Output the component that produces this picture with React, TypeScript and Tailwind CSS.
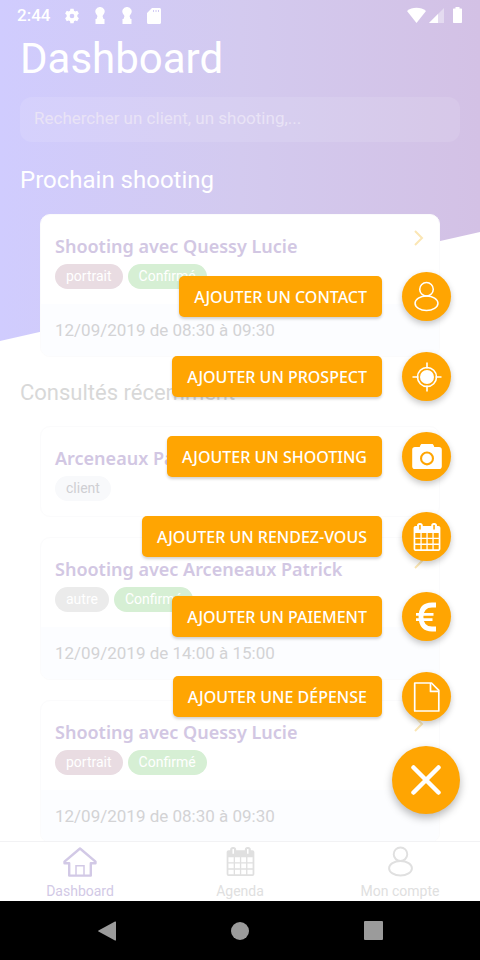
import type { ReactNode } from "react";

const roboto = "font-['Roboto','Liberation_Sans',sans-serif]";
const heading = "font-['Noto_Sans','Open_Sans',sans-serif]";

function PersonIcon({ size, stroke }: { size: number; stroke: number }) {
  return (
    <svg width={size} height={size} viewBox="0 0 32 32" fill="none" stroke="currentColor" strokeWidth={stroke} aria-hidden="true">
      <circle cx="16" cy="8.500" r="7" />
      <ellipse cx="16" cy="23" rx="11.800" ry="7.500" />
    </svg>
  );
}

function TargetIcon() {
  return (
    <svg width="30" height="30" viewBox="0 0 30 30" fill="none" stroke="currentColor" strokeWidth="1.600" aria-hidden="true">
      <circle cx="15" cy="15" r="9.500" />
      <circle cx="15" cy="15" r="7" fill="currentColor" stroke="none" />
      <path d="M15 .5v6M15 23.500v6M.5 15h6M23.500 15h6" />
    </svg>
  );
}

function CameraIcon() {
  return (
    <svg width="30" height="30" viewBox="0 0 30 30" fill="currentColor" aria-hidden="true">
      <path fillRule="evenodd" d="M10 2h10c.8 0 1.200.4 1.500 1.100L22.300 5H27c1.700 0 2.800 1.100 2.800 2.700v16.700c0 1.600-1.100 2.700-2.800 2.700H3C1.300 27.100.2 26 .2 24.400V7.700C.2 6.100 1.300 5 3 5h4.700l.8-1.900C8.800 2.400 9.200 2 10 2zM15 9.400a7 7 0 1 0 0 14 7 7 0 0 0 0-14zm0 2.100a4.900 4.900 0 1 1 0 9.800 4.900 4.900 0 0 1 0-9.800z" />
    </svg>
  );
}

function CalendarIcon({ size }: { size: number }) {
  return (
    <svg width={size} height={size} viewBox="0 0 30 30" aria-hidden="true">
      <path
        fill="currentColor"
        fillRule="evenodd"
        d="M3.500 4H5V3.500C5 2 6 1 7.500 1h.8c1.500 0 2.500 1 2.500 2.500V4h8.400v-.5c0-1.500 1-2.500 2.500-2.500h.8C24 1 25 2 25 3.500V4h1.500c1.100 0 1.900.8 1.900 1.900v21.200c0 1.100-.8 1.900-1.900 1.900h-23c-1.100 0-1.900-.8-1.900-1.900V5.900C1.600 4.800 2.400 4 3.500 4zM7.200 3v4.500h1.500V3zM21.300 3v4.500h1.500V3zM3.300 11v4.700h5.100V11zm6.400 0v4.700h4.700V11zm6 0v4.700h4.700V11zm6 0v4.700h5V11zM3.300 17v4.600h5.100V17zm6.400 0v4.600h4.700V17zm6 0v4.600h4.700V17zm6 0v4.600h5V17zM3.300 22.900v4.400h5.100v-4.400zm6.400 0v4.400h4.700v-4.400zm6 0v4.400h4.700v-4.400zm6 0v4.400h5v-4.400z"
      />
    </svg>
  );
}

function EuroIcon() {
  return (
    <svg width="30" height="30" viewBox="0 0 30 30" fill="none" stroke="currentColor" aria-hidden="true">
      <path strokeWidth="4.800" d="M24 3H20C13 3 9 7 9 15s4 12 11 12h4" />
      <path strokeWidth="2.800" d="M4 12.300h17.500M4 17.700h16.500" />
    </svg>
  );
}

function FileIcon() {
  return (
    <svg width="30" height="30" viewBox="0 0 30 30" fill="none" stroke="currentColor" strokeWidth="1.700" strokeLinejoin="round" aria-hidden="true">
      <path d="M2.700 1h16.800l7.300 7.400V29H2.700z" />
      <path d="M18.500 1v8.400h8.300" />
    </svg>
  );
}

function HomeIcon() {
  return (
    <svg width="34" height="30" viewBox="0 0 34 30" fill="none" stroke="currentColor" aria-hidden="true">
      <path strokeWidth="2.400" strokeLinejoin="round" d="M17 1.500 1.500 14.600v1.600h4.700V28.600h21.600V16.200h4.700v-1.600z" />
      <path strokeWidth="1.500" d="M13 28.500V18.800h8v9.700" />
    </svg>
  );
}

function Keyhole({ className }: { className: string }) {
  return (
    <svg className={className} width="12" height="17" viewBox="0 0 12 17" fill="currentColor" aria-hidden="true">
      <path d="M6 0a4.500 4.500 0 0 0-3.500 7.500L3.500 9 2.500 12H1.500v5h9v-5h-1l-1-3 1-1.500A4.500 4.500 0 0 0 6 0z" />
    </svg>
  );
}

function StatusBar() {
  return (
    <div className="flex h-[31px] shrink-0 items-center justify-between px-[17px] text-white">
      <div className="flex items-center">
        <span className="text-[17px] font-medium">2:44</span>
        <svg className="ml-[14px]" width="16" height="16" viewBox="0 0 24 24" fill="currentColor" aria-hidden="true">
          <path fillRule="evenodd" d="M9.600 1h4.800l.6 3.100 1.900 1.100 3-1.100 2.400 4.200L20 10.600v2.700l2.300 2.200-2.400 4.200-3-1-1.900 1.100-.6 3.200H9.600L9 19.800l-1.900-1.100-3 1-2.400-4.200L4 13.300v-2.700L1.700 8.300l2.400-4.200 3 1.100L9 4.100zM12 8.500a3.500 3.500 0 1 0 0 7 3.500 3.500 0 0 0 0-7z" />
        </svg>
        <Keyhole className="ml-[14px]" />
        <Keyhole className="ml-[15px]" />
        <svg className="ml-[14px]" width="14" height="16" viewBox="0 0 14 16" fill="currentColor" aria-hidden="true">
          <path fillRule="evenodd" d="M5 0h7.500C13.400 0 14 .6 14 1.500v13c0 .9-.6 1.500-1.500 1.500h-11C.6 16 0 15.400 0 14.500V5zm1 2v2h1V2zm2.500 0v2h1V2zM11 2v2h1V2z" />
        </svg>
      </div>
      <svg width="56" height="17" viewBox="0 0 56 17" fill="currentColor" aria-hidden="true">
        <path d="M0 4C5-.3 14-.3 19 4L9.500 16z" />
        <path d="M37 1v15H22z" opacity=".4" />
        <path d="M31 7v9h-9z" />
        <path d="M48.500 0h4v1.500H54c.7 0 1 .4 1 1V15c0 .7-.4 1-1 1h-7c-.7 0-1-.4-1-1V2.500c0-.6.3-1 1-1h1.500z" />
      </svg>
    </div>
  );
}

type Tag = { text: string; tone: string };

const portrait: Tag = { text: "portrait", tone: "bg-[#e9dce2] text-white" };
const confirmed: Tag = { text: "Confirmé", tone: "bg-[#d6efd4] text-white" };
const other: Tag = { text: "autre", tone: "bg-[#ebebeb] text-white" };
const client: Tag = { text: "client", tone: "bg-[#f8f9fb] text-[#cfcfd3]" };

function Card({ title, tags, date }: { title: string; tags: Tag[]; date?: string }) {
  return (
    <article className="mx-5 overflow-hidden rounded-[10px] border border-[#fbfbfc] bg-white">
      <div className="flex h-[89px] items-start justify-between px-[14px]">
        <div className="pt-[17px]">
          <h3 className={`text-[18px] leading-[28px] font-semibold text-[#d2c7e3] ${heading}`}>{title}</h3>
          <ul className="mt-[4px] flex gap-[5px]">
            {tags.map((tag) => (
              <li key={tag.text} className={`h-[25px] rounded-full px-[11px] text-[14px] leading-[25px] ${tag.tone}`}>
                {tag.text}
              </li>
            ))}
          </ul>
        </div>
        {date && (
          <svg className="mt-[15px]" width="12" height="16" viewBox="0 0 12 16" fill="none" stroke="#fbe6b4" strokeWidth="2" aria-hidden="true">
            <path d="M2 1l7 7-7 7" />
          </svg>
        )}
      </div>
      {date && <p className="h-[52px] bg-[#fcfdff] px-[14px] text-[17px] leading-[53px] text-[#d3d3d5]">{date}</p>}
    </article>
  );
}

const actions: { label: string; icon: ReactNode }[] = [
  { label: "AJOUTER UN CONTACT", icon: <PersonIcon size={31} stroke={1.6} /> },
  { label: "AJOUTER UN PROSPECT", icon: <TargetIcon /> },
  { label: "AJOUTER UN SHOOTING", icon: <CameraIcon /> },
  { label: "AJOUTER UN RENDEZ-VOUS", icon: <CalendarIcon size={30} /> },
  { label: "AJOUTER UN PAIEMENT", icon: <EuroIcon /> },
  { label: "AJOUTER UNE DÉPENSE", icon: <FileIcon /> },
];

function ActionMenu() {
  return (
    <div className="absolute right-5 bottom-[146px] flex flex-col items-end">
      <div className="mr-[9px] mb-[25px] flex flex-col items-end gap-[31px]">
        {actions.map((action) => (
          <button key={action.label} type="button" className="flex items-center gap-5 text-white">
            <span className={`h-[41px] rounded-[5px] bg-[#ffa502] px-[15px] text-[16px] leading-[42px] font-medium whitespace-nowrap shadow-[0_2px_3px_rgba(0,0,0,0.18)] ${heading}`}>
              {action.label}
            </span>
            <span className="flex size-[49px] items-center justify-center rounded-full bg-[#ffa502] shadow-[0_3px_6px_rgba(0,0,0,0.22)]">
              {action.icon}
            </span>
          </button>
        ))}
      </div>
      <button type="button" aria-label="Fermer" className="flex size-[68px] items-center justify-center rounded-full bg-[#ffa502] text-white shadow-[0_4px_8px_rgba(0,0,0,0.28)]">
        <svg width="30" height="30" viewBox="0 0 30 30" fill="none" stroke="currentColor" strokeWidth="4.500" strokeLinecap="round" aria-hidden="true">
          <path d="M2.500 2.500l25 25M27.500 2.500l-25 25" />
        </svg>
      </button>
    </div>
  );
}

function Tab({ label, icon, tone }: { label: string; icon: ReactNode; tone: string }) {
  return (
    <a href="#" className={`flex flex-1 flex-col items-center pt-[4px] text-[14px] leading-[16px] ${tone}`}>
      <span className="flex h-[31px] items-center">{icon}</span>
      <span className="mt-[6px]">{label}</span>
    </a>
  );
}

export default function App() {
  return (
    <div className={`relative flex h-screen flex-col overflow-hidden bg-white ${roboto}`}>
      <div className="absolute inset-x-0 top-0 h-[341px] bg-linear-to-r from-[#d0ccfe] via-[#d3caef] to-[#d3c1e5] [clip-path:polygon(0_0,100%_0,100%_68%,0_100%)]" />
      <main className="relative flex min-h-0 flex-1 flex-col overflow-hidden">
        <StatusBar />
        <div className="px-5">
          <h1 className="text-[42px] leading-[56px] text-white">Dashboard</h1>
          <input
            type="search"
            aria-label="Rechercher"
            placeholder="Rechercher un client, un shooting,..."
            className="mt-[10px] block h-[45px] w-full rounded-[12px] bg-white/10 px-[14px] pb-[4px] text-[17px] outline-none placeholder:text-[#e9e3f6]"
          />
          <h2 className="mt-[22px] mb-[18px] text-[24px] leading-[32px] text-white">Prochain shooting</h2>
          <Card title="Shooting avec Quessy Lucie" tags={[portrait, confirmed]} date="12/09/2019 de 08:30 à 09:30" />
          <h2 className="mt-[20px] mb-[17px] text-[22px] leading-[32px] text-[#d8d8d8]">Consultés récemment</h2>
          <div className="flex flex-col gap-5">
            <Card title="Arceneaux Patrick" tags={[client]} />
            <Card title="Shooting avec Arceneaux Patrick" tags={[other, confirmed]} date="12/09/2019 de 14:00 à 15:00" />
            <Card title="Shooting avec Quessy Lucie" tags={[portrait, confirmed]} date="12/09/2019 de 08:30 à 09:30" />
          </div>
        </div>
      </main>
      <nav className="relative flex h-[60px] shrink-0 border-t border-[#f2f2f4] bg-white">
        <Tab label="Dashboard" icon={<HomeIcon />} tone="text-[#d2c9e6]" />
        <Tab label="Agenda" icon={<CalendarIcon size={31} />} tone="text-[#e0e0e0]" />
        <Tab label="Mon compte" icon={<PersonIcon size={31} stroke={2} />} tone="text-[#e0e0e0]" />
      </nav>
      <div className="relative flex h-[59px] shrink-0 items-center justify-center bg-black text-[#9b9b9b]">
        <button type="button" aria-label="Retour" className="flex w-[133px] justify-center">
          <svg width="18" height="20" viewBox="0 0 18 20" fill="currentColor" aria-hidden="true">
            <path d="M17 0.500c.6-.3 1 0 1 .6v17.800c0 .6-.4.900-1 .6L.5 10.600c-.5-.3-.5-.9 0-1.200z" />
          </svg>
        </button>
        <button type="button" aria-label="Accueil" className="flex w-[133px] justify-center">
          <span className="size-[18px] rounded-full bg-current" />
        </button>
        <button type="button" aria-label="Applications" className="flex w-[133px] justify-center">
          <span className="size-[19px] rounded-[1px] bg-current" />
        </button>
      </div>
      <ActionMenu />
    </div>
  );
}
